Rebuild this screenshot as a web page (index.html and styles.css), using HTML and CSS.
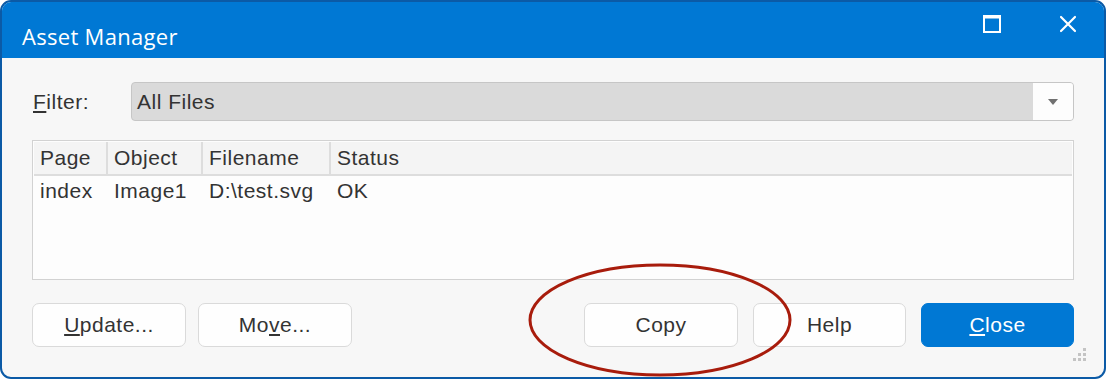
FILE: index.html
```html
<!DOCTYPE html>
<html>
<head>
<meta charset="utf-8">
<link rel="stylesheet" href="styles.css">
</head>
<body>
<div class="window">
  <div class="titlebar">
    <span class="title">Asset Manager</span>
    <div class="controls">
      <svg class="ctl" width="20" height="20" viewBox="0 0 20 20"><rect x="2" y="2" width="16" height="16" fill="none" stroke="#fff" stroke-width="2"/><line x1="2" y1="3.5" x2="18" y2="3.5" stroke="#fff" stroke-width="2"/></svg>
      <svg class="ctl" width="20" height="20" viewBox="0 0 20 20"><path d="M3 3 L17 17 M17 3 L3 17" stroke="#fff" stroke-width="2.2" stroke-linecap="round"/></svg>
    </div>
  </div>
  <div class="content">
    <div class="filter-row">
      <label class="filter-label"><u>F</u>ilter:</label>
      <div class="combo">
        <span class="combo-text">All Files</span>
        <div class="combo-btn"><svg width="12" height="8" viewBox="0 0 12 8"><path d="M1 1 L11 1 L6 7 Z" fill="#707070"/></svg></div>
      </div>
    </div>
    <div class="table">
      <div class="thead">
        <div class="th c1">Page</div>
        <div class="th c2">Object</div>
        <div class="th c3">Filename</div>
        <div class="th c4">Status</div>
      </div>
      <div class="trow">
        <div class="td c1">index</div>
        <div class="td c2">Image1</div>
        <div class="td c3">D:\test.svg</div>
        <div class="td c4">OK</div>
      </div>
    </div>
    <div class="buttons">
      <div class="group">
        <button class="btn"><u>U</u>pdate...</button>
        <button class="btn">Mo<u>v</u>e...</button>
      </div>
      <div class="group right">
        <button class="btn">Copy</button>
        <button class="btn">Help</button>
        <button class="btn primary"><u>C</u>lose</button>
      </div>
    </div>
    <svg class="grip" width="16" height="16" viewBox="0 0 16 16">
      <rect x="11" y="1" width="3" height="3" fill="#c4c4c4"/>
      <rect x="6" y="6" width="3" height="3" fill="#c4c4c4"/>
      <rect x="11" y="6" width="3" height="3" fill="#c4c4c4"/>
      <rect x="1" y="11" width="3" height="3" fill="#c4c4c4"/>
      <rect x="6" y="11" width="3" height="3" fill="#c4c4c4"/>
      <rect x="11" y="11" width="3" height="3" fill="#c4c4c4"/>
    </svg>
  </div>
  <svg class="annotation" width="266" height="116" viewBox="0 0 266 116"><ellipse cx="133" cy="58" rx="130" ry="55" fill="none" stroke="#a81c0c" stroke-width="3"/></svg>
</div>
</body>
</html>
```
FILE: styles.css
```css
html, body {
  margin: 0;
  padding: 0;
  background: #ffffff;
}
body {
  width: 1106px;
  height: 379px;
  overflow: hidden;
}
.window {
  position: relative;
  box-sizing: border-box;
  width: 1106px;
  height: 379px;
  border: 2px solid #0b5aa6;
  border-radius: 11px;
  overflow: hidden;
  background: #f7f7f7;
  display: flex;
  flex-direction: column;
  font-family: "Liberation Sans", Arial, sans-serif;
  color: #333333;
  letter-spacing: 0.5px;
}
.titlebar {
  height: 56px;
  background: #0078d4;
  display: flex;
  align-items: center;
  justify-content: space-between;
  padding: 0 0 0 20px;
  flex: none;
}
.title {
  font-family: "Open Sans", "Noto Sans", sans-serif;
  font-size: 22px;
  letter-spacing: 0.3px;
  color: #ffffff;
  padding-top: 12px;
}
.controls {
  display: flex;
  align-items: center;
  gap: 56px;
  padding-right: 26px;
  margin-top: -13px;
}
.ctl { display: block; }
.content {
  position: relative;
  flex: 1;
  padding: 24px 30px 0 30px;
  display: flex;
  flex-direction: column;
}
.filter-row {
  display: flex;
  align-items: center;
  height: 39px;
}
.filter-label {
  width: 98px;
  font-size: 21px;
  color: #333;
  padding-left: 1px;
}
.combo {
  flex: 1;
  height: 39px;
  box-sizing: border-box;
  border: 1px solid #c6c6c6;
  border-radius: 4px;
  background: #dadada;
  display: flex;
  align-items: center;
  overflow: hidden;
}
.combo-text {
  flex: 1;
  font-size: 21px;
  padding-left: 5px;
  color: #333;
}
.combo-btn {
  width: 40px;
  height: 100%;
  background: #fdfdfd;
  display: flex;
  align-items: center;
  justify-content: center;
}
.table {
  margin-top: 19px;
  height: 140px;
  box-sizing: border-box;
  border: 1px solid #d2d2d2;
  background: #fdfdfd;
  padding: 1px;
}
.thead {
  display: flex;
  height: 32px;
  background: #f4f4f4;
  border-bottom: 2px solid #dddddd;
}
.th {
  box-sizing: border-box;
  font-size: 21px;
  line-height: 32px;
  padding-left: 6px;
  border-right: 2px solid #dddddd;
}
.th.c4 { flex: 1; border-right: none; }
.trow {
  display: flex;
  height: 30px;
}
.td {
  box-sizing: border-box;
  font-size: 21px;
  line-height: 30px;
  padding-left: 6px;
}
.c1 { width: 74px; }
.c2 { width: 95px; }
.c3 { width: 128px; }
.c4 { flex: 1; }
.buttons {
  margin-top: 23px;
  display: flex;
  justify-content: space-between;
}
.group {
  display: flex;
  gap: 12px;
}
.group.right { gap: 15px; }
.btn {
  width: 154px;
  height: 44px;
  box-sizing: border-box;
  border: 1px solid #dadada;
  border-radius: 7px;
  background: #fefefe;
  font-family: "Liberation Sans", Arial, sans-serif;
  font-size: 21px;
  letter-spacing: 0.5px;
  color: #333;
  padding: 0;
}
.group.right .btn:not(:first-child) { width: 153px; }
.btn.primary {
  background: #0078d4;
  border-color: #0078d4;
  color: #ffffff;
}
.grip {
  position: absolute;
  right: 16px;
  bottom: 14px;
}
.annotation {
  position: absolute;
  left: 525px;
  top: 260px;
}
```
